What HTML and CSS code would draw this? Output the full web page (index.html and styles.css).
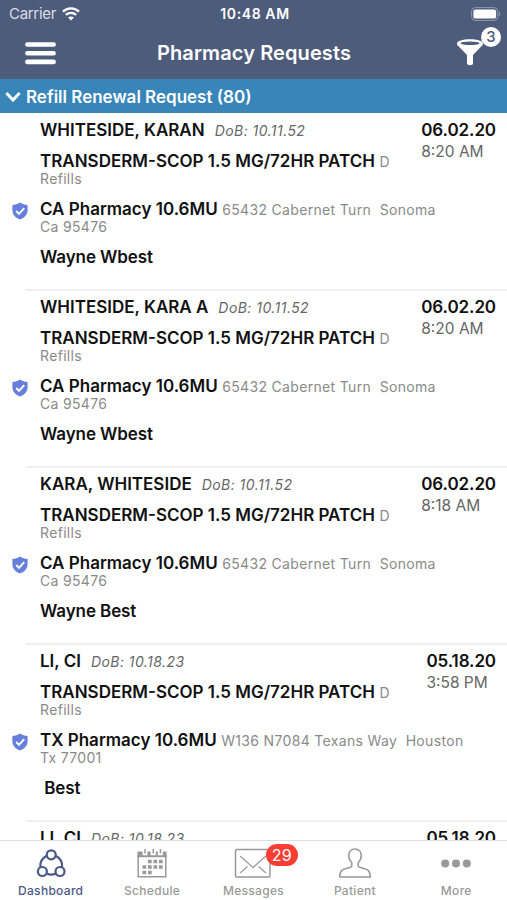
FILE: index.html
```html
<!DOCTYPE html>
<html lang="en">
<head>
    <meta charset="UTF-8">
    <meta name="viewport" content="width=device-width, initial-scale=1.0">
    <title>Pharmacy Requests</title>
    <link rel="stylesheet" href="styles.css">
</head>
<body>
    <div class="app">
        <header class="header">
            <div class="status-bar">
                <div class="carrier">
                    <span class="carrier-name">Carrier</span>
                    <svg width="18" height="14" viewBox="0 0 18 14">
                        <path d="M1 4.600C5.500.2 12.500.2 17 4.600M3.900 7.900c2.900-2.700 7.300-2.700 10.200 0" fill="none" stroke="#fff" stroke-width="2.300"/>
                        <path d="M9 13.600l-2.900-3c1.600-1.400 4.200-1.400 5.800 0z" fill="#fff"/>
                    </svg>
                </div>
                <span class="clock">10:48 AM</span>
                <svg class="battery" width="30" height="14" viewBox="0 0 30 14">
                    <rect x=".6" y=".6" width="26.300" height="12.800" rx="3.800" fill="none" stroke="#9299b0" stroke-width="1"/>
                    <rect x="2.400" y="2.400" width="22.700" height="9.200" rx="2.200" fill="#fff"/>
                    <path d="M28 5v4.200c1.800-.7 1.800-3.500 0-4.200z" fill="#9299b0"/>
                </svg>
            </div>
            <div class="nav-bar">
                <button class="nav-button">
                    <svg width="32" height="24" viewBox="0 0 32 24">
                        <path d="M3.400 3.500h26.200M3.400 12.200h26.200M3.400 20.900h26.200" stroke="#fff" stroke-width="4.600" stroke-linecap="round"/>
                    </svg>
                </button>
                <h1 class="title">Pharmacy Requests</h1>
                <button class="nav-button filter-button">
                    <svg width="26" height="27" viewBox="0 0 26 27">
                        <path d="M0 4.400C0 2 5.700.3 13 .3s13 1.700 13 4.100c0 1.200-.6 2-1.600 2.900L16 16v8.600c0 2.200-6 2.200-6 0V16L1.600 7.300C.6 6.400 0 5.600 0 4.400z" fill="#fff"/>
                        <ellipse cx="13" cy="4.200" rx="9.500" ry="1.700" fill="#4e5c7c"/>
                    </svg>
                    <span class="filter-badge">3</span>
                </button>
            </div>
        </header>

        <div class="section-header">
            <svg width="16" height="12" viewBox="0 0 16 12">
                <path d="M1.400 2l6.600 7 6.600-7" fill="none" stroke="#fff" stroke-width="3"/>
            </svg>
            <span>Refill Renewal Request (80)</span>
        </div>

        <main class="list">
            <article class="request">
                <div class="details">
                    <div class="patient"><b class="name">WHITESIDE, KARAN</b><i class="dob">DoB: 10.11.52</i></div>
                    <div class="drug"><b class="drug-name">TRANSDERM-SCOP 1.5 MG/72HR PATCH</b> <span class="note">D<br>Refills</span></div>
                    <div class="pharmacy">
                        <svg class="shield" width="16" height="18" viewBox="0 0 16 18">
                            <path d="M8 .5c2.400 1.700 4.800 2.300 7.600 2.400v5.300c0 4.300-3 7.400-7.600 9.300C3.400 15.600.4 12.500.4 8.200V2.900C3.200 2.800 5.600 2.200 8 .5z" fill="#667fdc"/>
                            <path d="M4.200 9l2.800 2.800 5.200-5.600" fill="none" stroke="#fff" stroke-width="1.900"/>
                        </svg>
                        <b class="pharmacy-name">CA Pharmacy 10.6MU</b> <span class="note">65432 Cabernet Turn&nbsp; Sonoma<br>Ca 95476</span>
                    </div>
                    <div class="doctor">Wayne Wbest</div>
                </div>
                <div class="received"><b class="date">06.02.20</b><span class="time">8:20 AM</span></div>
            </article>

            <article class="request">
                <div class="details">
                    <div class="patient"><b class="name">WHITESIDE, KARA A</b><i class="dob">DoB: 10.11.52</i></div>
                    <div class="drug"><b class="drug-name">TRANSDERM-SCOP 1.5 MG/72HR PATCH</b> <span class="note">D<br>Refills</span></div>
                    <div class="pharmacy">
                        <svg class="shield" width="16" height="18" viewBox="0 0 16 18">
                            <path d="M8 .5c2.400 1.700 4.800 2.300 7.600 2.400v5.300c0 4.300-3 7.400-7.600 9.300C3.400 15.600.4 12.500.4 8.200V2.900C3.200 2.800 5.600 2.200 8 .5z" fill="#667fdc"/>
                            <path d="M4.200 9l2.800 2.800 5.200-5.600" fill="none" stroke="#fff" stroke-width="1.900"/>
                        </svg>
                        <b class="pharmacy-name">CA Pharmacy 10.6MU</b> <span class="note">65432 Cabernet Turn&nbsp; Sonoma<br>Ca 95476</span>
                    </div>
                    <div class="doctor">Wayne Wbest</div>
                </div>
                <div class="received"><b class="date">06.02.20</b><span class="time">8:20 AM</span></div>
            </article>

            <article class="request">
                <div class="details">
                    <div class="patient"><b class="name">KARA, WHITESIDE</b><i class="dob">DoB: 10.11.52</i></div>
                    <div class="drug"><b class="drug-name">TRANSDERM-SCOP 1.5 MG/72HR PATCH</b> <span class="note">D<br>Refills</span></div>
                    <div class="pharmacy">
                        <svg class="shield" width="16" height="18" viewBox="0 0 16 18">
                            <path d="M8 .5c2.400 1.700 4.800 2.300 7.600 2.400v5.300c0 4.300-3 7.400-7.600 9.300C3.400 15.600.4 12.500.4 8.200V2.900C3.200 2.800 5.600 2.200 8 .5z" fill="#667fdc"/>
                            <path d="M4.200 9l2.800 2.800 5.200-5.600" fill="none" stroke="#fff" stroke-width="1.900"/>
                        </svg>
                        <b class="pharmacy-name">CA Pharmacy 10.6MU</b> <span class="note">65432 Cabernet Turn&nbsp; Sonoma<br>Ca 95476</span>
                    </div>
                    <div class="doctor">Wayne Best</div>
                </div>
                <div class="received"><b class="date">06.02.20</b><span class="time">8:18 AM</span></div>
            </article>

            <article class="request">
                <div class="details">
                    <div class="patient"><b class="name">LI, CI</b><i class="dob">DoB: 10.18.23</i></div>
                    <div class="drug"><b class="drug-name">TRANSDERM-SCOP 1.5 MG/72HR PATCH</b> <span class="note">D<br>Refills</span></div>
                    <div class="pharmacy">
                        <svg class="shield" width="16" height="18" viewBox="0 0 16 18">
                            <path d="M8 .5c2.400 1.700 4.800 2.300 7.600 2.400v5.300c0 4.300-3 7.400-7.600 9.300C3.400 15.600.4 12.500.4 8.200V2.900C3.200 2.800 5.600 2.200 8 .5z" fill="#667fdc"/>
                            <path d="M4.200 9l2.800 2.800 5.200-5.600" fill="none" stroke="#fff" stroke-width="1.900"/>
                        </svg>
                        <b class="pharmacy-name">TX Pharmacy 10.6MU</b> <span class="note">W136 N7084 Texans Way&nbsp; Houston<br>Tx 77001</span>
                    </div>
                    <div class="doctor">&nbsp;Best</div>
                </div>
                <div class="received"><b class="date">05.18.20</b><span class="time">3:58 PM</span></div>
            </article>

            <article class="request">
                <div class="details">
                    <div class="patient"><b class="name">LI, CI</b><i class="dob">DoB: 10.18.23</i></div>
                </div>
                <div class="received"><b class="date">05.18.20</b></div>
            </article>
        </main>

        <nav class="tab-bar">
            <a class="tab active">
                <svg width="32" height="32" viewBox="0 0 32 32" fill="none" stroke="#4a5a87" stroke-width="2.200">
                    <circle cx="16.200" cy="7.800" r="4.500"/>
                    <circle cx="7.400" cy="24.500" r="4.500"/>
                    <circle cx="25" cy="24.500" r="4.500"/>
                    <path d="M11.700 8.800c-4.500 2.400-6.900 6.700-6.400 11.600M20.700 8.800c4.500 2.400 6.900 6.700 6.400 11.600M11.700 26.500c2.800 1.500 6.200 1.500 9 0"/>
                </svg>
                <span>Dashboard</span>
            </a>
            <a class="tab">
                <svg width="32" height="32" viewBox="0 0 32 32">
                    <path d="M2.200 8v21.800h27.600V8" fill="none" stroke="#999" stroke-width="1.500"/>
                    <path d="M1.400 4.600h5.200v3.600h4.800V4.600h3.200v3.600h5.200V4.600h2v3.600h5V4.600h3.800v5.600H1.400z" fill="#999"/>
                    <path d="M9 2v4.500M17.300 2v4.500M24.400 2v4.500" stroke="#999" stroke-width="1.500"/>
                    <path d="M12 14.500h15M6.500 20h20.500M6.500 25.500h9.500" stroke="#999" stroke-width="3.500" stroke-dasharray="3.700 1.800"/>
                </svg>
                <span>Schedule</span>
            </a>
            <a class="tab">
                <svg width="38" height="32" viewBox="0 0 38 32" fill="none" stroke="#999" stroke-width="1.500">
                    <rect x="1.500" y="2.500" width="34.500" height="27.500" rx="1"/>
                    <path d="M6 9l13 11.500L32 9M6 26l7.500-6.500M32 26l-7.500-6.500" stroke-width="1.200"/>
                </svg>
                <span class="tab-badge">29</span>
                <span>Messages</span>
            </a>
            <a class="tab">
                <svg width="34" height="32" viewBox="0 0 34 32">
                    <path d="M17 2c-3.900 0-6.200 2.700-6.200 6.500 0 3.100 1.100 5.400 3 7.200v3c0 1-1 1.600-4 2.300C4.800 22.200 1.700 23 1.700 30h30.600c0-7-3.100-7.800-8.100-9-3-.7-4-1.300-4-2.300v-3c1.900-1.800 3-4.100 3-7.200C23.200 4.700 20.900 2 17 2z" fill="none" stroke="#999" stroke-width="1.500"/>
                </svg>
                <span>Patient</span>
            </a>
            <a class="tab">
                <svg width="30" height="32" viewBox="0 0 30 32" fill="#999">
                    <circle cx="4.200" cy="16.500" r="4"/>
                    <circle cx="15" cy="16.500" r="4"/>
                    <circle cx="25.800" cy="16.500" r="4"/>
                </svg>
                <span>More</span>
            </a>
        </nav>
    </div>
</body>
</html>
```
FILE: styles.css
```css
body {
    margin: 0;
    font-family: Inter, Roboto, sans-serif;
    background: #fff;
    color: #111;
}

.app {
    display: flex;
    flex-direction: column;
    width: 100%;
    height: 900px;
    overflow: hidden;
}

.header {
    height: 79px;
    background: #4e5c7c;
    color: #fff;
}

.status-bar {
    display: grid;
    grid-template-columns: 1fr auto 1fr;
    align-items: center;
    height: 27px;
    padding: 0 6px 0 9px;
    font-size: 15px;
}

.carrier {
    display: flex;
    align-items: center;
    gap: 6px;
}

.carrier-name {
    color: #d9dce4;
    letter-spacing: -0.3px;
}

.clock {
    font-weight: 600;
    font-size: 14px;
    letter-spacing: 0.6px;
}

.battery {
    justify-self: end;
}

.nav-bar {
    display: flex;
    align-items: center;
    justify-content: space-between;
    height: 51px;
    padding: 0 24px;
}

.nav-button {
    position: relative;
    display: flex;
    padding: 0;
    border: none;
    background: none;
    cursor: pointer;
}

.title {
    margin: 0 5px 0 0;
    font-size: 20px;
    font-weight: 600;
    letter-spacing: 0.1px;
}

.filter-badge {
    position: absolute;
    top: -12px;
    right: -18px;
    width: 20px;
    height: 20px;
    border-radius: 50%;
    background: #fff;
    color: #4e5c7c;
    font-family: Inter, sans-serif;
    font-size: 15px;
    font-weight: 500;
    line-height: 20px;
    text-align: center;
}

.section-header {
    display: flex;
    align-items: center;
    box-sizing: border-box;
    gap: 5px;
    height: 34px;
    padding: 1px 0 0 5px;
    background: #3785b9;
    color: #fff;
    font-size: 17px;
    font-weight: 600;
}

.list {
    flex: 1;
    min-height: 0;
    padding-top: 1px;
    overflow: hidden;
}

.request {
    display: flex;
    box-sizing: border-box;
    height: 177px;
    margin-left: 26px;
    padding: 7px 11px 0 14px;
    border-bottom: 2px solid #f0f0f0;
    line-height: 19px;
    white-space: nowrap;
}

.details {
    flex: 1;
    min-width: 0;
}

.received {
    display: flex;
    flex-direction: column;
    gap: 2px;
}

.name,
.drug-name,
.pharmacy-name,
.doctor,
.date {
    font-size: 17px;
    font-weight: 600;
}

.patient {
    height: 31px;
}

.dob {
    margin-left: 10px;
    color: #666;
    font-size: 14px;
    letter-spacing: 0.45px;
}

.drug,
.pharmacy {
    box-sizing: border-box;
    height: 48px;
    padding-top: 1px;
    line-height: 17px;
}

.pharmacy {
    position: relative;
}

.note {
    color: #8a8a8a;
    font-size: 14px;
    letter-spacing: 0.33px;
}

.shield {
    position: absolute;
    top: 2px;
    left: -28px;
}

.doctor {
    letter-spacing: -0.1px;
}

.date {
    letter-spacing: -0.1px;
}

.time {
    color: #666;
    font-size: 15.5px;
}

.tab-bar {
    display: grid;
    grid-template-columns: repeat(5, 1fr);
    height: 59px;
    border-top: 1px solid #ddd;
    background: #fff;
    color: #999;
}

.tab {
    position: relative;
    display: flex;
    flex-direction: column;
    align-items: center;
    padding-top: 6px;
    font-size: 12px;
    font-weight: 500;
    letter-spacing: 0.3px;
    line-height: 23px;
}

.active {
    color: #4a5a87;
}

.tab-badge {
    position: absolute;
    top: 3px;
    left: 63px;
    width: 32px;
    height: 22px;
    border-radius: 11px;
    background: #fc3d33;
    color: #fff;
    font-size: 16px;
    font-weight: 400;
    line-height: 22px;
    text-align: center;
}
```
